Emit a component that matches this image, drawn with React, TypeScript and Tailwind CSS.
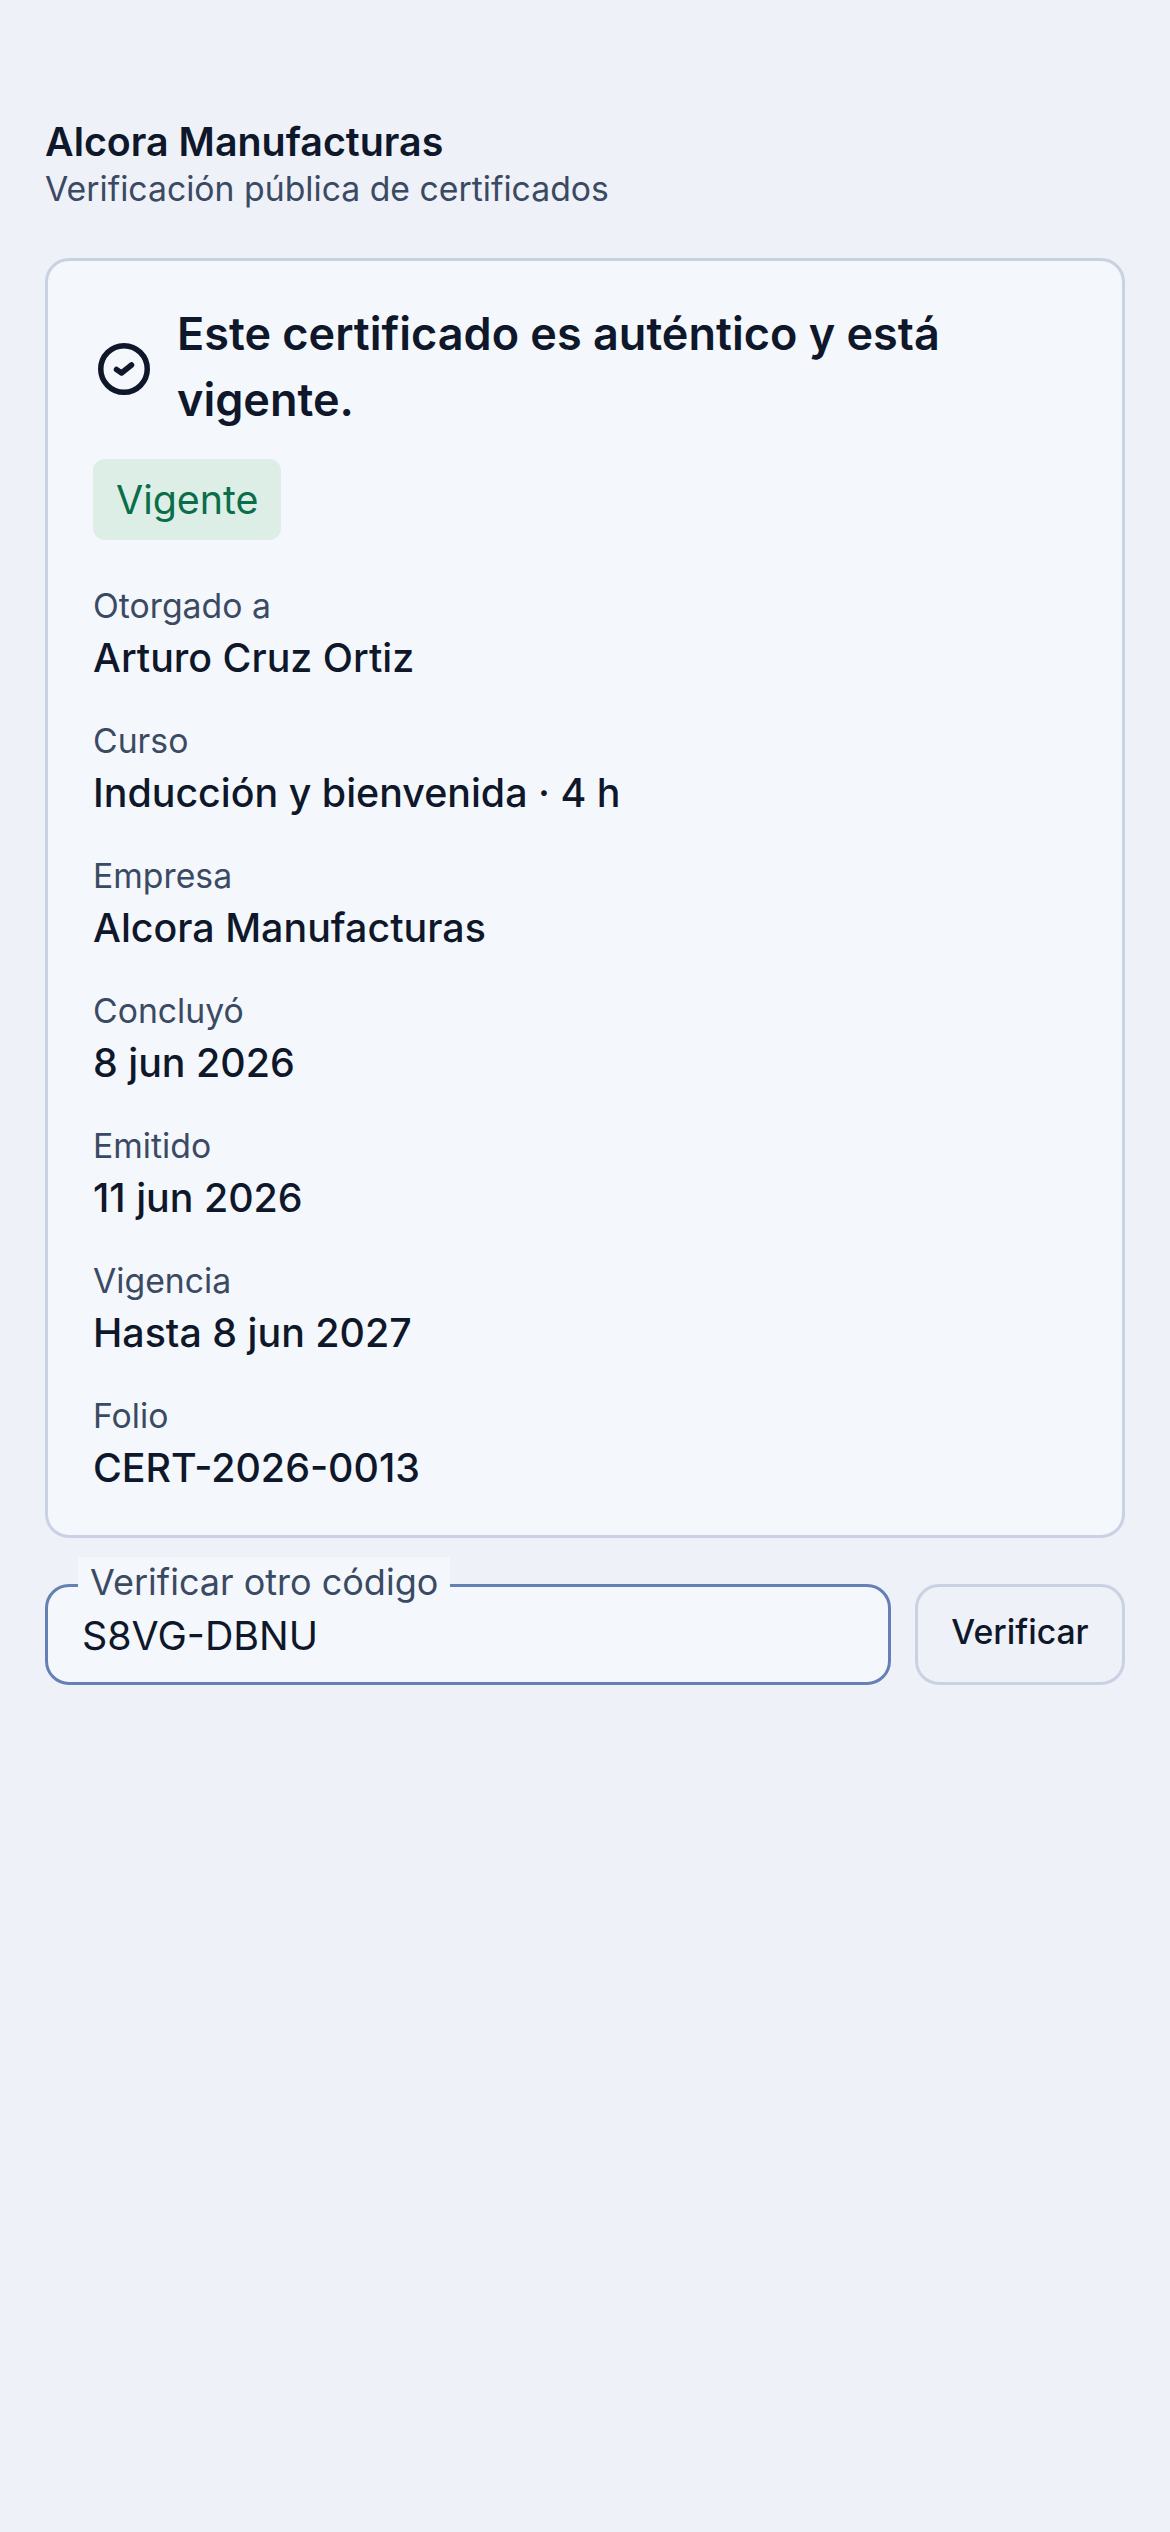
const rows = [
  ["Otorgado a", "Arturo Cruz Ortiz"],
  ["Curso", "Inducción y bienvenida · 4 h"],
  ["Empresa", "Alcora Manufacturas"],
  ["Concluyó", "8 jun 2026"],
  ["Emitido", "11 jun 2026"],
  ["Vigencia", "Hasta 8 jun 2027"],
  ["Folio", "CERT-2026-0013"],
];

export default function App() {
  return (
    <div className="min-h-[2532px] bg-[#eef1f8] px-[45px] pt-[116px] font-['Inter',sans-serif] text-[#0f172a]">
      <h1 className="text-[39.375px] leading-[52px] font-semibold">Alcora Manufacturas</h1>
      <p className="text-[33.75px] leading-[42px] text-[#3b4a63]">Verificación pública de certificados</p>

      <div className="mt-[48px] rounded-[24px] border-[3px] border-[#c9d1e3] bg-[#f4f7fc] px-[45px] py-[40px]">
        <div className="flex items-center gap-[24px]">
          <svg viewBox="0 0 60 60" className="h-[60px] w-[60px] shrink-0 fill-none stroke-[#0f172a]">
            <circle cx="31" cy="32" r="23.25" strokeWidth="5.5" />
            <path d="M23.5 32.5l5 3.5 10-8" strokeWidth="5.5" strokeLinecap="round" strokeLinejoin="round" />
          </svg>
          <h2 className="text-[45px] leading-[66px] font-semibold">Este certificado es auténtico y está vigente.</h2>
        </div>
        <div className="mt-[26px] w-fit rounded-[12px] bg-[#dceee6] px-[23px] py-[15px] text-[39.375px] leading-[51px] text-[#0a6e4a]">
          Vigente
        </div>
        <dl className="mt-[40px] flex flex-col gap-[30px]">
          {rows.map(([label, value]) => (
            <div key={label}>
              <dt className="text-[33.75px] leading-[51px] text-[#3b4a63]">{label}</dt>
              <dd className="text-[39.375px] leading-[54px] font-medium">{value}</dd>
            </div>
          ))}
        </dl>
      </div>

      <div className="mt-[46px] flex gap-[24px]">
        <div className="relative flex h-[101px] flex-1 items-center rounded-[24px] border-[3px] border-[#6580b5] bg-[#f4f7fc] px-[34px] text-[39.375px]">
          <span className="absolute -top-[30px] left-[30px] bg-[#f4f7fc] px-[12px] text-[36px] leading-[51px] text-[#3b4a63]">
            Verificar otro código
          </span>
          <span className="pt-[2px]">S8VG-DBNU</span>
        </div>
        <button className="h-[101px] w-[210px] rounded-[24px] border-[3px] border-[#c9d1e3] bg-[#eef1f8] pb-[5px] text-[33.75px] font-medium">
          Verificar
        </button>
      </div>
    </div>
  );
}
